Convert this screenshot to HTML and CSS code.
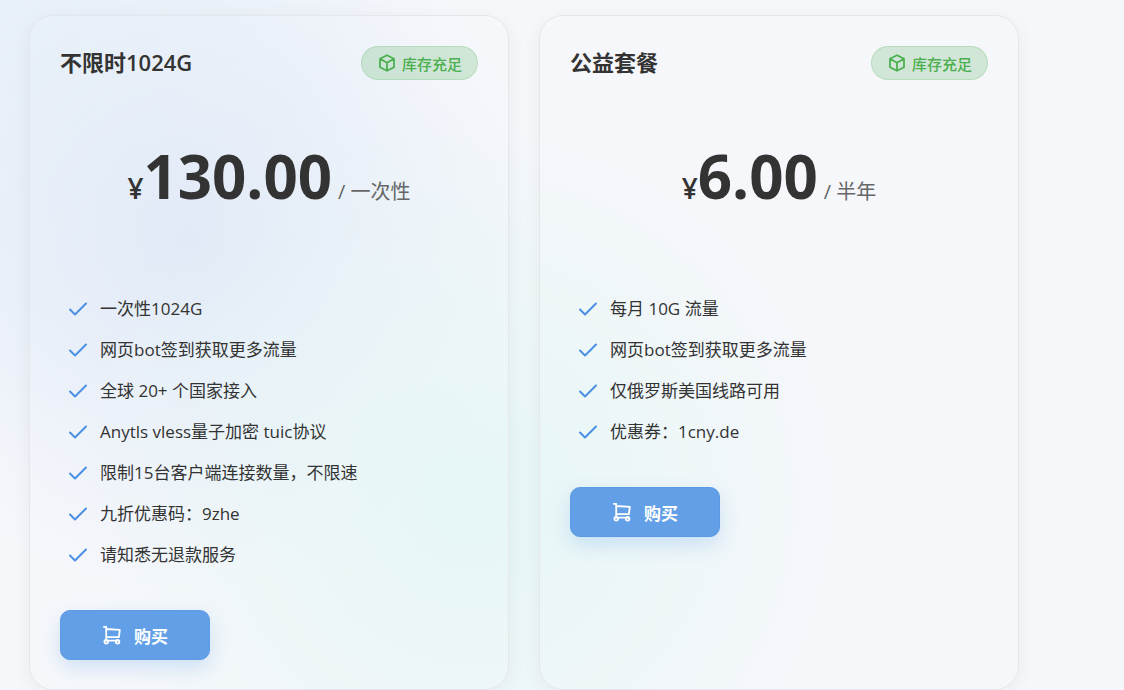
FILE: index.html
```
<!DOCTYPE html>
<html lang="zh-CN">
<head>
<meta charset="utf-8">
<meta name="viewport" content="width=device-width, initial-scale=1">
<title>套餐</title>
<link rel="stylesheet" href="styles.css">
</head>
<body class="page">
<svg class="sprite" aria-hidden="true">
  <symbol id="box" viewBox="0 0 18 18"><path d="M9 1.2 16 4.8v8.4L9 16.8 2 13.2V4.8zM2 4.8l7 4 7-4M9 8.8v8"/></symbol>
  <symbol id="check" viewBox="0 0 20 20"><path d="M2 10.5 7 15.5 18 4.5"/></symbol>
  <symbol id="cart" viewBox="0 0 20 20"><path d="M1.8 1.8h2.4v10.4M4.2 4l13.6.9-.9 7.3H4.2v3.4M4.6 15.6h11"/><circle cx="4.2" cy="16.8" r="1.8"/><circle cx="15.6" cy="16.8" r="1.8"/></symbol>
</svg>
<main class="plans">
  <article class="card">
    <header class="card-head">
      <h2 class="title">不限时1024G</h2>
      <span class="badge"><svg class="icon-box"><use href="#box"/></svg>库存充足</span>
    </header>
    <p class="price"><span class="currency">¥</span><strong class="amount">130.00</strong><span class="period">/ 一次性</span></p>
    <ul class="features">
      <li class="feature"><svg class="icon-check"><use href="#check"/></svg>一次性1024G</li>
      <li class="feature"><svg class="icon-check"><use href="#check"/></svg>网页bot签到获取更多流量</li>
      <li class="feature"><svg class="icon-check"><use href="#check"/></svg>全球 20+ 个国家接入</li>
      <li class="feature"><svg class="icon-check"><use href="#check"/></svg>Anytls vless量子加密 tuic协议</li>
      <li class="feature"><svg class="icon-check"><use href="#check"/></svg>限制15台客户端连接数量，不限速</li>
      <li class="feature"><svg class="icon-check"><use href="#check"/></svg>九折优惠码：9zhe</li>
      <li class="feature"><svg class="icon-check"><use href="#check"/></svg>请知悉无退款服务</li>
    </ul>
    <button class="buy" type="button"><svg class="icon-cart"><use href="#cart"/></svg>购买</button>
  </article>
  <article class="card">
    <header class="card-head">
      <h2 class="title">公益套餐</h2>
      <span class="badge"><svg class="icon-box"><use href="#box"/></svg>库存充足</span>
    </header>
    <p class="price"><span class="currency">¥</span><strong class="amount">6.00</strong><span class="period">/ 半年</span></p>
    <ul class="features">
      <li class="feature"><svg class="icon-check"><use href="#check"/></svg>每月 10G 流量</li>
      <li class="feature"><svg class="icon-check"><use href="#check"/></svg>网页bot签到获取更多流量</li>
      <li class="feature"><svg class="icon-check"><use href="#check"/></svg>仅俄罗斯美国线路可用</li>
      <li class="feature"><svg class="icon-check"><use href="#check"/></svg>优惠券：1cny.de</li>
    </ul>
    <button class="buy" type="button"><svg class="icon-cart"><use href="#cart"/></svg>购买</button>
  </article>
</main>
</body>
</html>
```

FILE: styles.css
```
* { box-sizing: border-box; }

.page {
  margin: 0;
  padding: 15px 29px 0;
  min-height: 100vh;
  color: #333;
  font-family: "Open Sans", "Noto Sans CJK SC", sans-serif;
  background:
    radial-gradient(circle at 470px 500px, rgba(228, 246, 245, .9), rgba(228, 246, 245, 0) 400px),
    radial-gradient(circle at 190px 240px, rgba(223, 233, 247, .9), rgba(223, 233, 247, 0) 350px),
    radial-gradient(circle at 0 0, rgba(230, 240, 248, .8), rgba(230, 240, 248, 0) 440px),
    #f6f7fb;
}

.sprite { display: none; }

.plans {
  display: grid;
  grid-template-columns: repeat(auto-fit, minmax(min(100%, 320px), 1fr));
  gap: 30px;
  max-width: 990px;
}

.card {
  padding: 30px 30px 29px;
  border: 1px solid #e6e7ea;
  border-radius: 24px;
  box-shadow: 0 4px 20px rgba(0, 0, 0, .05);
}

.card-head {
  display: flex;
  align-items: flex-start;
  justify-content: space-between;
}

.title {
  margin: 0;
  font-size: 22px;
  line-height: 32px;
  font-weight: 600;
}

.badge {
  display: flex;
  align-items: center;
  gap: 6px;
  height: 34px;
  padding: 0 15px 0 16px;
  border: 1px solid rgba(76, 175, 80, .2);
  border-radius: 17px;
  background: rgba(76, 175, 80, .22);
  color: #4caf50;
  font-size: 15px;
  font-weight: 500;
}

.icon-box, .icon-check, .icon-cart {
  flex: none;
  fill: none;
  stroke: currentColor;
  stroke-linejoin: round;
  stroke-linecap: round;
}

.icon-box { width: 18px; height: 18px; stroke-width: 1.8; }
.icon-check { width: 20px; height: 20px; color: #4a90e2; stroke-width: 2; }
.icon-cart { width: 20px; height: 20px; stroke-width: 1.8; }

.price {
  display: flex;
  align-items: baseline;
  justify-content: center;
  margin: 60px 0;
  line-height: 72px;
}

.currency { font-size: 28px; font-weight: 600; }
.amount { font-size: 60px; font-weight: 700; }
.period { margin-left: 6px; font-size: 20px; color: #666; }

.features {
  margin: 0 0 35px;
  padding: 0 8px;
  list-style: none;
}

.feature {
  display: flex;
  align-items: center;
  gap: 12px;
  padding: 8px 0;
  font-size: 17px;
  line-height: 25px;
}

.buy {
  display: flex;
  align-items: center;
  justify-content: center;
  gap: 12px;
  width: 150px;
  height: 50px;
  padding: 0;
  border: 1px solid #5b9ae4;
  border-radius: 10px;
  background: #629fe6;
  color: #fff;
  font: inherit;
  font-size: 17px;
  font-weight: 600;
  box-shadow: 0 8px 20px rgba(74, 144, 226, .22);
}
```
